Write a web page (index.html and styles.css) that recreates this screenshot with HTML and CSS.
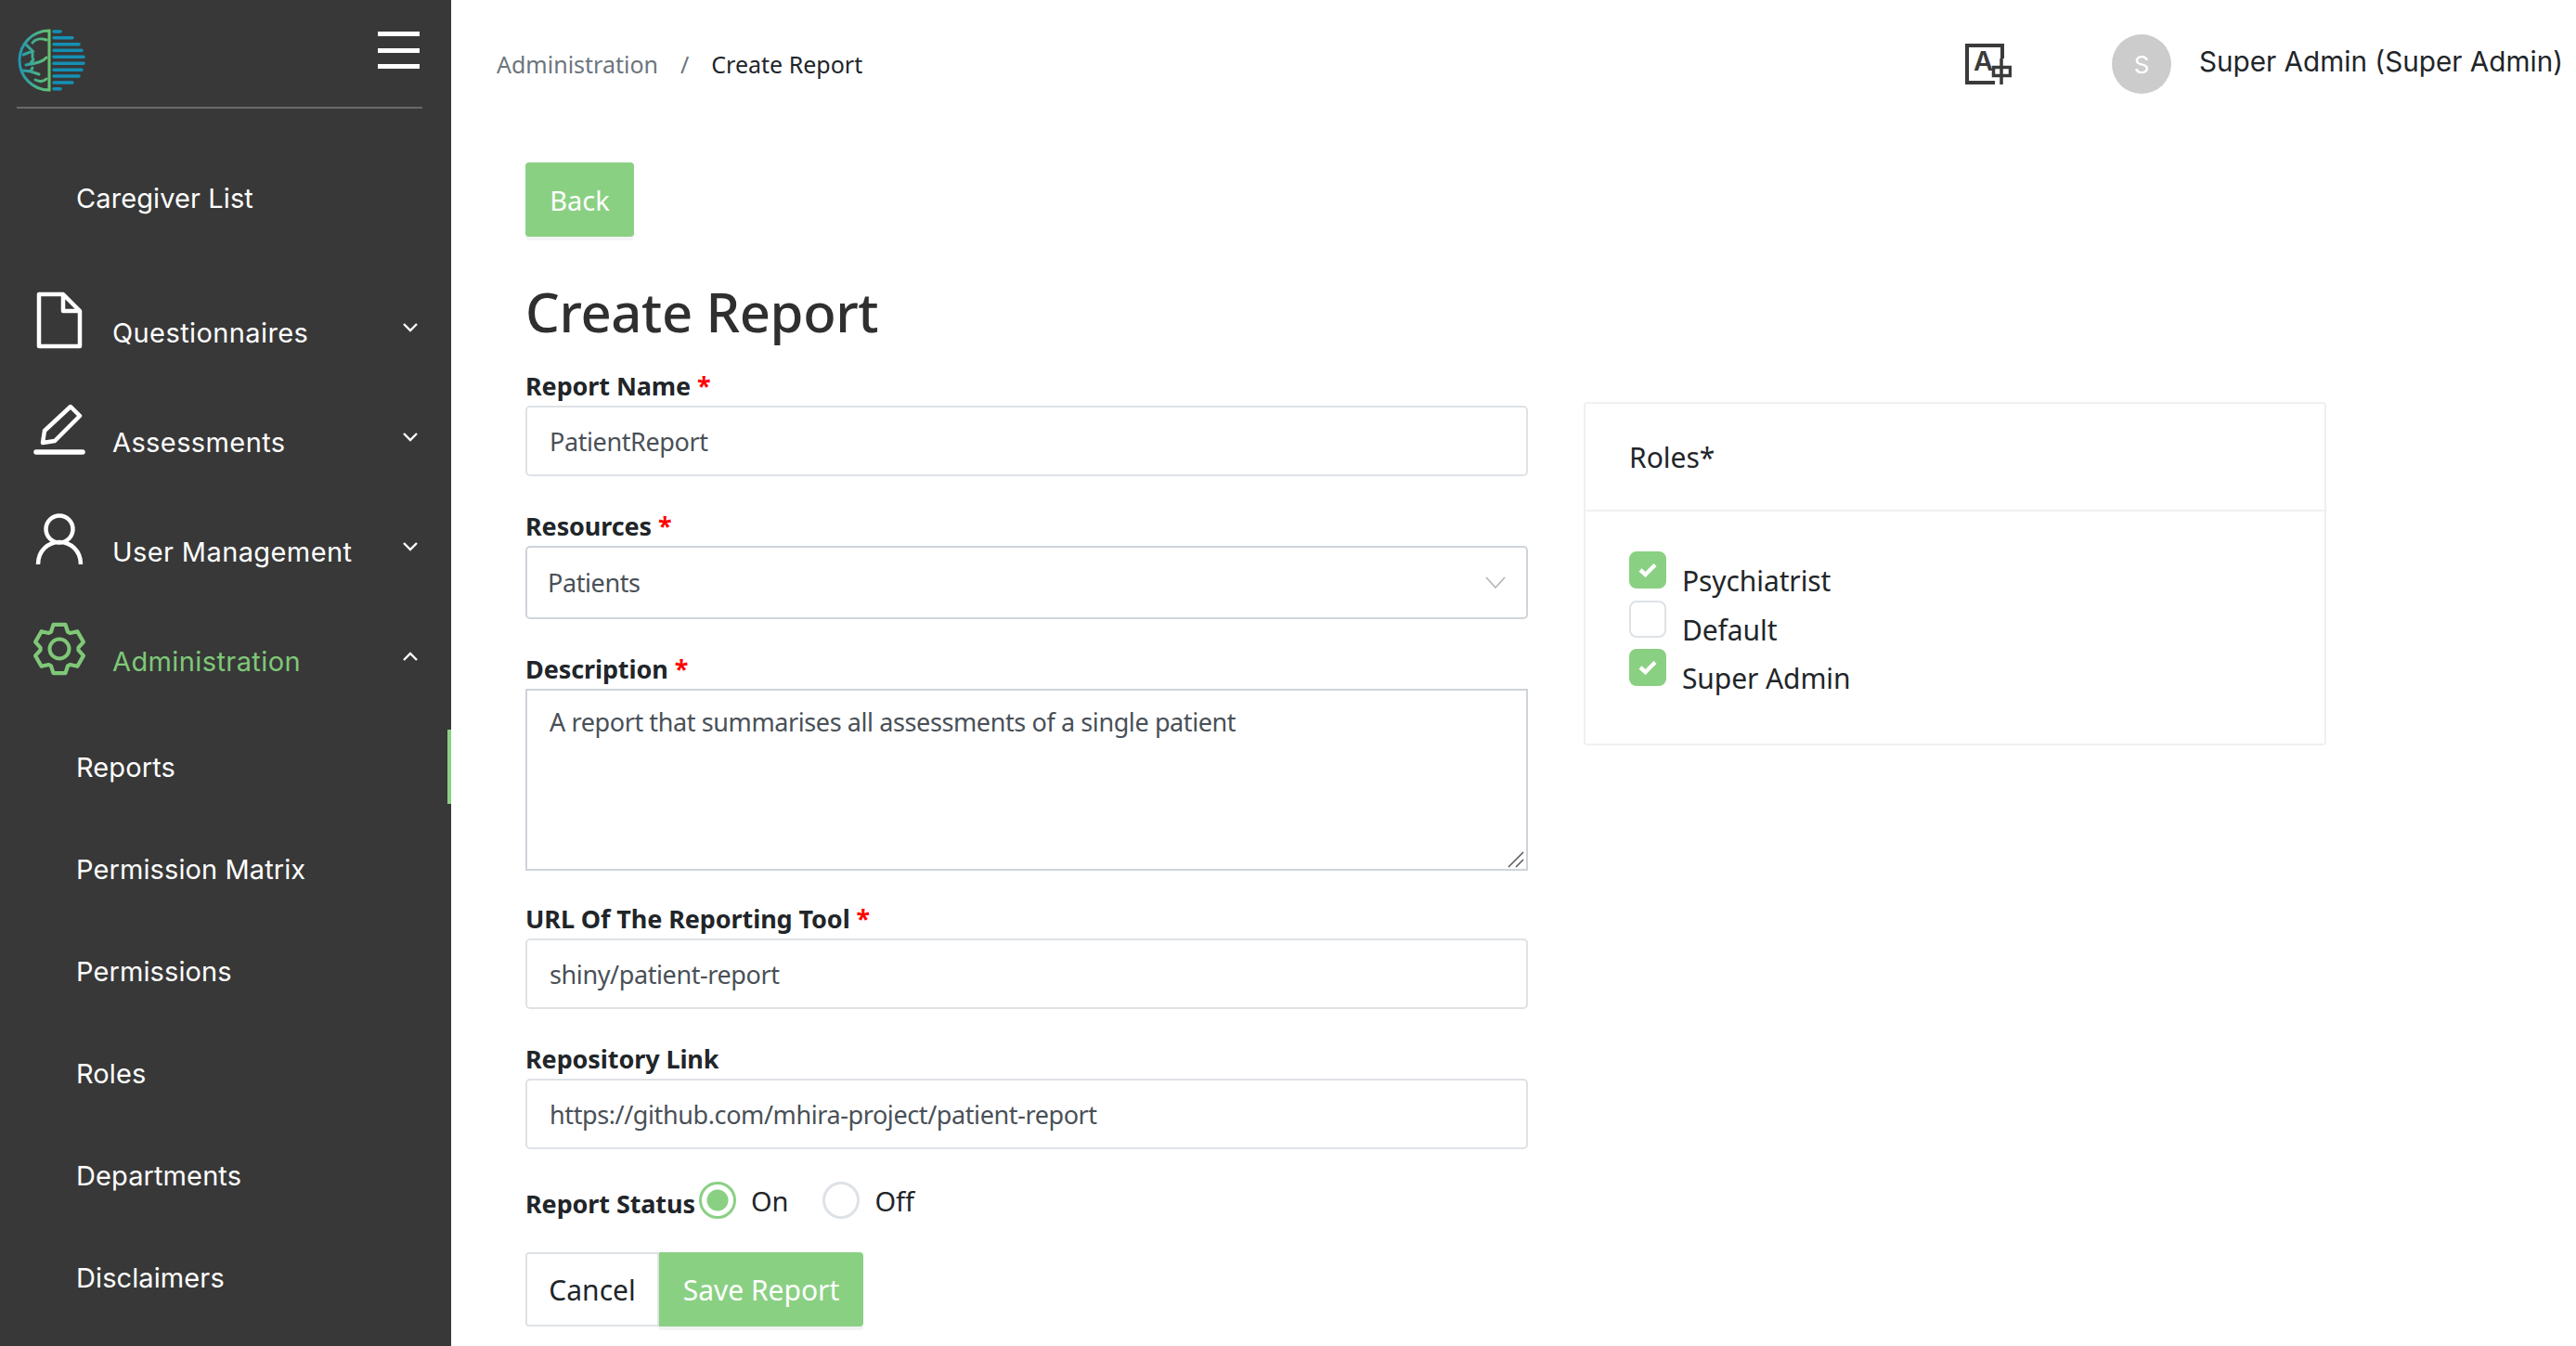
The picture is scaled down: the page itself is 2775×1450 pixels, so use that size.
FILE: index.html
```html
<!DOCTYPE html>
<html lang="en">
<head>
<meta charset="utf-8">
<title>Create Report</title>
<link rel="stylesheet" href="styles.css">
</head>
<body>
<div class="app">
  <aside class="sidebar">
    <div class="brand">
      <svg class="logo" width="74" height="68" viewBox="0 0 74 68">
        <defs><linearGradient id="lg" gradientUnits="userSpaceOnUse" x1="0" x2="36" y1="34" y2="34"><stop offset="0" stop-color="#1a92b5"/><stop offset="1" stop-color="#68c56f"/></linearGradient></defs>
        <path d="M35 2A32 32 0 1 0 35 66Z" fill="none" stroke="url(#lg)" stroke-width="3"/>
        <path d="M32 12C26 10 20 11 17 15M10 17L17 24L7 28M17 24L17 31M32 31C28 36 20 37 10 39M15 37L18 33M7 45L15 46L24 49M15 46L17 42M32 54C28 58 24 57 20 55" fill="none" stroke="url(#lg)" stroke-width="3" stroke-linecap="round"/>
        <g stroke="#1590b4" stroke-width="3.600" stroke-linecap="round"><path d="M40 3H47M40 9.700H60M40 16.700H67M40 23.300H70M40 30.300H72M40 37.300H72M40 44.300H70M40 51H67M40 58H60M40 64.700H47"/></g>
      </svg>
      <button class="burger" aria-label="Menu"><span></span><span></span><span></span></button>
    </div>
    <nav class="nav">
      <a class="sub first">Caregiver List</a>
      <a class="top t1">
        <svg class="ico" width="50" height="62" viewBox="0 0 50 62"><path d="M3 3H29L47 21V59H3ZM29 3V21H47" fill="none" stroke="#fff" stroke-width="4.500" stroke-linejoin="round"/></svg>
        <span>Questionnaires</span>
        <svg class="chev" width="18" height="12" viewBox="0 0 18 12"><path d="M2 2L9 9L16 2" fill="none" stroke="#fff" stroke-width="2.400"/></svg>
      </a>
      <a class="top">
        <svg class="ico" width="56" height="56" viewBox="0 0 56 56"><path d="M40 3L50 13L23 40L10 42L12 29Z" fill="none" stroke="#fff" stroke-width="4.500" stroke-linejoin="round"/><path d="M3 52H53" stroke="#fff" stroke-width="5.500" stroke-linecap="round"/></svg>
        <span>Assessments</span>
        <svg class="chev" width="18" height="12" viewBox="0 0 18 12"><path d="M2 2L9 9L16 2" fill="none" stroke="#fff" stroke-width="2.400"/></svg>
      </a>
      <a class="top">
        <svg class="ico" width="54" height="58" viewBox="0 0 54 58"><circle cx="27" cy="18" r="14.500" fill="none" stroke="#fff" stroke-width="4.500"/><path d="M4 56C4 41 15 32 27 32C39 32 50 41 50 56" fill="none" stroke="#fff" stroke-width="4.500"/></svg>
        <span>User Management</span>
        <svg class="chev" width="18" height="12" viewBox="0 0 18 12"><path d="M2 2L9 9L16 2" fill="none" stroke="#fff" stroke-width="2.400"/></svg>
      </a>
      <a class="top active">
        <svg class="ico" width="60" height="60" viewBox="0 0 60 60"><path d="M21 11.600L23.500 3.800H36.500L39 11.600L41.500 13L49.400 11.200L55.900 22.600L50.500 28.600V31.400L55.900 37.400L49.400 48.800L41.500 47L39 48.400L36.500 56.200H23.500L21 48.400L18.500 47L10.600 48.800L4.100 37.400L9.500 31.400V28.600L4.100 22.600L10.600 11.200L18.500 13Z" fill="none" stroke="#7fc878" stroke-width="4.200" stroke-linejoin="round"/><circle cx="30" cy="30" r="10.500" fill="none" stroke="#7fc878" stroke-width="4"/></svg>
        <span>Administration</span>
        <svg class="chev" width="18" height="12" viewBox="0 0 18 12"><path d="M2 10L9 3L16 10" fill="none" stroke="#fff" stroke-width="2.400"/></svg>
      </a>
      <a class="sub current">Reports</a>
      <a class="sub">Permission Matrix</a>
      <a class="sub">Permissions</a>
      <a class="sub">Roles</a>
      <a class="sub">Departments</a>
      <a class="sub">Disclaimers</a>
    </nav>
  </aside>
  <main class="main">
    <header class="topbar">
      <div class="crumbs"><span class="crumb-link">Administration</span><span class="crumb-sep">/</span><span class="crumb-now">Create Report</span></div>
      <svg class="lang" width="50" height="44" viewBox="0 0 50 44"><path d="M32 42H2V2H40V16" fill="none" stroke="#3a3a3a" stroke-width="4"/><text class="lang-a" x="9" y="29">A</text><path d="M30.500 25.500H48.500V34.500H30.500ZM39 16V44" fill="none" stroke="#3a3a3a" stroke-width="3.500"/></svg>
      <div class="avatar">S</div>
      <div class="username">Super Admin (Super Admin)</div>
    </header>
    <section class="content">
      <button class="btn green back">Back</button>
      <h1 class="title">Create Report</h1>
      <div class="columns">
        <form class="form">
          <label class="lbl">Report Name <i>*</i></label>
          <div class="input">PatientReport</div>
          <label class="lbl">Resources <i>*</i></label>
          <div class="input select"><span>Patients</span><svg width="22" height="14" viewBox="0 0 22 14"><path d="M1 1L11 12L21 1" fill="none" stroke="#b5b8bb" stroke-width="1.800"/></svg></div>
          <label class="lbl">Description <i>*</i></label>
          <div class="input area">A report that summarises all assessments of a single patient
            <svg class="grip" width="18" height="18" viewBox="0 0 18 18"><path d="M1 17L17 1M9 17L17 9" stroke="#555" stroke-width="1.500"/></svg>
          </div>
          <label class="lbl">URL Of The Reporting Tool <i>*</i></label>
          <div class="input">shiny/patient-report</div>
          <label class="lbl">Repository Link</label>
          <div class="input">https://github.com/mhira-project/patient-report</div>
          <div class="status">
            <label class="lbl inline">Report Status</label>
            <span class="radio on"></span><span class="opt">On</span>
            <span class="radio"></span><span class="opt">Off</span>
          </div>
          <div class="actions"><button type="button" class="btn cancel">Cancel</button><button type="button" class="btn green save">Save Report</button></div>
        </form>
        <div class="card">
          <div class="card-head">Roles*</div>
          <div class="card-body">
            <div class="check"><span class="box on"><svg width="20" height="16" viewBox="0 0 20 16"><path d="M2 8L7.500 13L18 2.500" fill="none" stroke="#fff" stroke-width="4.400"/></svg></span><span>Psychiatrist</span></div>
            <div class="check"><span class="box"></span><span>Default</span></div>
            <div class="check"><span class="box on"><svg width="20" height="16" viewBox="0 0 20 16"><path d="M2 8L7.500 13L18 2.500" fill="none" stroke="#fff" stroke-width="4.400"/></svg></span><span>Super Admin</span></div>
          </div>
        </div>
      </div>
    </section>
  </main>
</div>
</body>
</html>
```
FILE: styles.css
```css
* { box-sizing: border-box; }
html, body { margin: 0; height: 100%; overflow: hidden; background: #fff; }
body { font-family: "Noto Sans", "Open Sans", sans-serif; color: #212529; font-size: 28px; }
.app { display: flex; height: 1450px; }

.sidebar { width: 486px; flex: none; background: #383838; color: #fff; font-family: "Inter", "Lato", sans-serif; overflow: hidden; position: relative; }
.brand { margin: 0 31px 0 18px; height: 117px; border-bottom: 2px solid #6a6a6a; display: flex; justify-content: space-between; padding-top: 31px; }
.logo { display: block; }
.burger { width: 45px; height: 40px; margin-top: 3px; margin-right: 3px; padding: 0; background: none; border: 0; display: flex; flex-direction: column; justify-content: space-between; }
.burger span { display: block; height: 5px; background: #fff; }
.nav { display: flex; flex-direction: column; }
.nav a { display: flex; color: #fff; font-size: 29px; letter-spacing: 0.4px; white-space: nowrap; }
.nav a.sub { height: 110px; padding-left: 82px; align-items: center; letter-spacing: 0.1px; }
.nav a.sub.first { margin-top: 41px; margin-bottom: 26px; }
.top { height: 118px; position: relative; padding-left: 121px; align-items: center; }
.top span { position: relative; top: 5px; }
.ico { position: absolute; left: 64px; top: 50%; transform: translate(-50%, -50%); margin-top: -8px; }
.chev { position: absolute; left: 433px; top: 50%; margin-top: -6px; }
.nav a.active { color: #7fc878; margin-bottom: 5px; }
.current { position: relative; }
.current::after { content: ""; position: absolute; right: 0; top: 15px; width: 4px; height: 80px; background: #8ad083; }

.main { flex: 1; min-width: 0; }
.topbar { height: 136px; display: flex; align-items: center; padding: 2px 0 0 49px; font-family: "Inter", "Lato", sans-serif; position: relative; }
.crumbs { font-size: 25px; font-family: "Noto Sans", sans-serif; display: flex; position: relative; }
.crumb-link { color: #6c757d; }
.crumb-sep { color: #6c757d; margin: 0 24px; }
.crumb-now { color: #212529; }
.lang { margin-left: auto; flex: none; }
.lang-a { font-family: "Inter", sans-serif; font-size: 29px; font-weight: 600; fill: #3a3a3a; }
.avatar { width: 64px; height: 64px; border-radius: 50%; background: #ccc; color: #fff; display: flex; align-items: center; justify-content: center; font-size: 26px; margin-left: 108px; }
.username { font-size: 29.700px; color: #212529; margin-left: 30px; margin-right: 14px; white-space: nowrap; position: relative; top: -3px; }

.content { padding: 39px 0 0 80px; }
.btn { font: inherit; border-radius: 4px; border: 2px solid #dee2e6; height: 80px; background: #fff; color: #212529; padding: 0 24px; }
.green { background: #8ad083; border-color: #8ad083; color: #fff; }
.back { width: 117px; display: block; font-size: 29px; padding: 0; box-shadow: 0 4px 0 #f3f4f5; }
.title { font-size: 58px; font-weight: 500; letter-spacing: -0.4px; margin: 45px 0 1px; line-height: 72px; height: 72px; color: #2f2f2f; }
.columns { display: flex; align-items: flex-start; }
.form { width: 1080px; padding-top: 24px; }
.lbl { display: block; font-weight: 700; font-size: 27px; line-height: 38px; height: 40px; letter-spacing: -0.1px; }
.lbl i { color: #f00; font-style: normal; font-weight: 700; }
.input { position: relative; height: 76px; border: 2px solid #dee2e6; border-radius: 5px; padding: 0 24px; display: flex; align-items: center; font-size: 27px; letter-spacing: -0.4px; color: #495057; margin: 0 0 35px; }
.select { justify-content: space-between; padding: 0 22px; height: 79px; border-color: #ced4da; }
.area { height: 196px; display: block; padding-top: 15px; border-radius: 0; line-height: 38px; border-color: #ced4da; margin-bottom: 33px; }
.grip { position: absolute; right: 2px; bottom: 1px; }
.status { display: flex; align-items: center; height: 42px; margin-top: -1px; }
.lbl.inline { position: relative; top: 4px; margin-right: 4px; height: 38px; }
.radio { width: 40px; height: 40px; border-radius: 50%; border: 3px solid #dee2e6; flex: none; background: #fff; }
.radio.on { border-color: #8ad083; background: radial-gradient(circle, #8ad083 0 11px, #fff 12px); }
.opt { margin: 0 37px 0 16px; font-size: 29px; }
.actions { display: flex; margin-top: 35px; }
.cancel { width: 144px; padding: 0; border-radius: 4px 0 0 4px; font-size: 30px; }
.save { width: 220px; padding: 0; border-radius: 0 4px 4px 0; font-size: 30px; box-shadow: 0 4px 0 #f1f3f4; }
.card { width: 800px; margin-left: 60px; margin-top: 60px; border: 2px solid #f0f0f0; border-radius: 4px; height: 370px; }
.card-head { height: 116px; border-bottom: 2px solid #f0f0f0; padding: 0 47px; display: flex; align-items: center; font-size: 30px; }
.card-body { padding: 43px 47px 0; }
.check { display: flex; height: 52.500px; font-size: 30px; letter-spacing: -0.1px; }
.check > span:last-child { position: relative; top: 12px; line-height: 40px; }
.box { width: 40px; height: 40px; border-radius: 8px; border: 2px solid #dee2e6; margin-right: 17px; display: flex; align-items: center; justify-content: center; flex: none; }
.box.on { background: #8ad083; border-color: #8ad083; }
```
